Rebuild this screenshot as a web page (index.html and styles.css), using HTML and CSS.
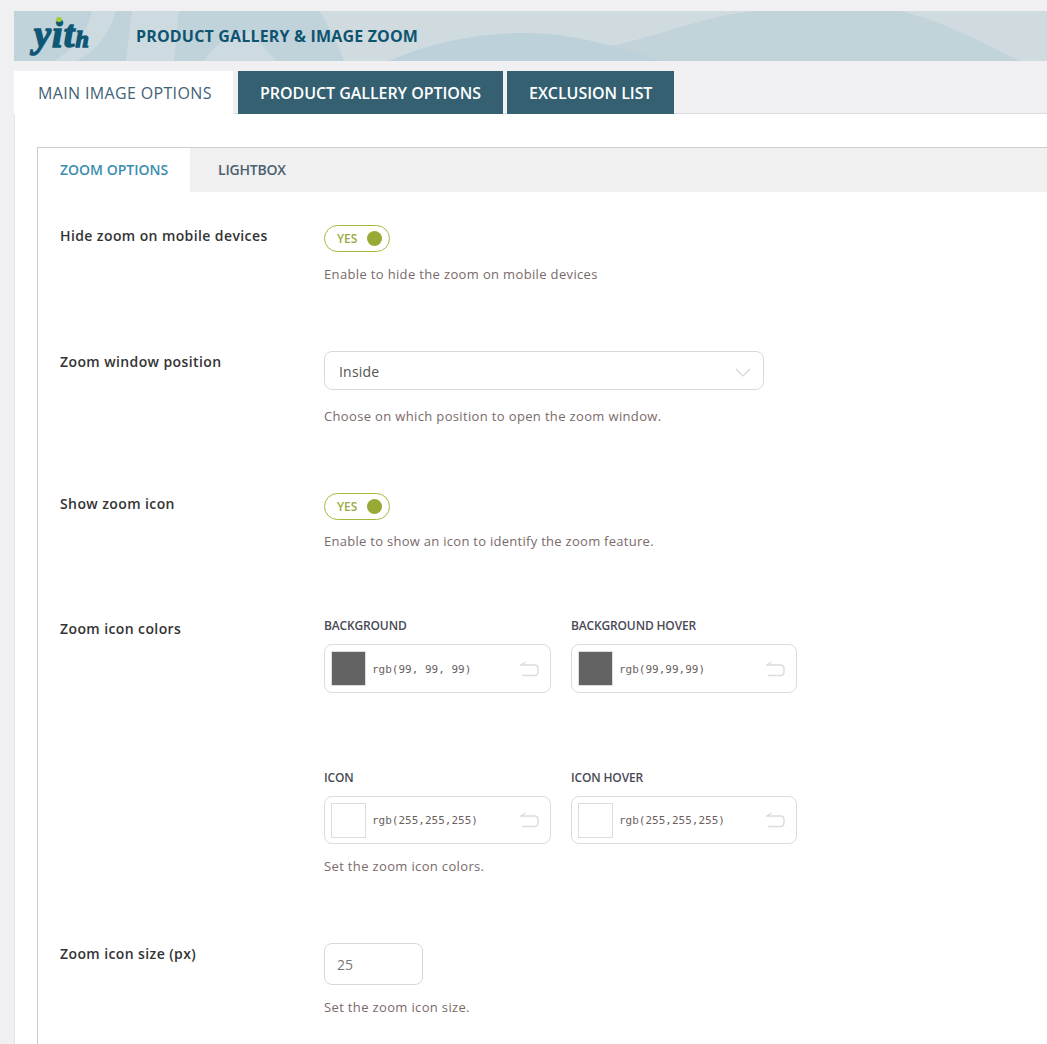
FILE: index.html
```html
<!DOCTYPE html>
<html lang="en">
<head>
    <meta charset="UTF-8">
    <title>Product Gallery &amp; Image Zoom</title>
    <link rel="stylesheet" href="styles.css">
</head>
<body>
    <div class="wrap">
        <header class="banner">
            <svg class="banner-waves" viewBox="0 0 1033 50" preserveAspectRatio="none" aria-hidden="true">
                <path d="M0 0H1033V50H0Z" fill="#d0dbe0"/>
                <path d="M0 0H305C315 15 325 35 330 50H0Z" fill="#c0d3db"/>
                <path d="M78 0H102C96 20 84 40 62 50H40C60 38 74 20 78 0Z" fill="#cddbe1"/>
                <path d="M118 0H165L160 50H112Z" fill="#cddbe1"/>
                <path d="M190 50C200 34 215 24 235 20L262 50Z" fill="#cddbe1"/>
                <path d="M400 50C470 40 560 45 606 33C660 20 700 2 745 0H886C930 10 975 35 1006 50Z" fill="#c3d3da"/>
                <path d="M375 50C420 30 470 22 510 22C560 22 600 35 650 50Z" fill="#bdd1da"/>
            </svg>
            <span class="logo">yit<small>h</small><i class="logo-dot"></i></span>
            <h1 class="banner-title">PRODUCT GALLERY &amp; IMAGE ZOOM</h1>
        </header>

        <nav class="main-tabs">
            <a class="main-tab active">MAIN IMAGE OPTIONS</a>
            <a class="main-tab">PRODUCT GALLERY OPTIONS</a>
            <a class="main-tab">EXCLUSION LIST</a>
        </nav>

        <div class="panel">
            <div class="box">
                <div class="sub-tabs">
                    <a class="sub-tab active">ZOOM OPTIONS</a>
                    <a class="sub-tab">LIGHTBOX</a>
                </div>

                <div class="option">
                    <label class="option-label">Hide zoom on mobile devices</label>
                    <div class="option-field">
                        <span class="toggle">YES<i class="toggle-dot"></i></span>
                        <p class="desc desc-first">Enable to hide the zoom on mobile devices</p>
                    </div>
                </div>

                <div class="option">
                    <label class="option-label">Zoom window position</label>
                    <div class="option-field">
                        <div class="select">
                            <span>Inside</span>
                            <svg class="chevron" width="16" height="9" viewBox="0 0 16 9"><path d="M1 1l7 7 7-7" fill="none" stroke="#d4d4d4" stroke-width="1.2"/></svg>
                        </div>
                        <p class="desc desc-select">Choose on which position to open the zoom window.</p>
                    </div>
                </div>

                <div class="option">
                    <label class="option-label">Show zoom icon</label>
                    <div class="option-field">
                        <span class="toggle">YES<i class="toggle-dot"></i></span>
                        <p class="desc desc-show">Enable to show an icon to identify the zoom feature.</p>
                    </div>
                </div>

                <div class="option">
                    <label class="option-label">Zoom icon colors</label>
                    <div class="option-field">
                        <div class="color-grid">
                            <div class="color-item">
                                <div class="color-title">BACKGROUND</div>
                                <div class="color-input">
                                    <span class="swatch swatch-dark"></span>
                                    <code class="color-value">rgb(99, 99, 99)</code>
                                    <svg class="reset" width="19" height="16" viewBox="0 0 19 16"><path d="M5.500 1L1 4H14.500Q18 4 18 7.500V10.500Q18 14.500 14.500 14.500H2" fill="none" stroke="#dcdcdc" stroke-width="1.400"/></svg>
                                </div>
                            </div>
                            <div class="color-item">
                                <div class="color-title">BACKGROUND HOVER</div>
                                <div class="color-input">
                                    <span class="swatch swatch-dark"></span>
                                    <code class="color-value">rgb(99,99,99)</code>
                                    <svg class="reset" width="19" height="16" viewBox="0 0 19 16"><path d="M5.500 1L1 4H14.500Q18 4 18 7.500V10.500Q18 14.500 14.500 14.500H2" fill="none" stroke="#dcdcdc" stroke-width="1.400"/></svg>
                                </div>
                            </div>
                            <div class="color-item">
                                <div class="color-title">ICON</div>
                                <div class="color-input color-input-low">
                                    <span class="swatch"></span>
                                    <code class="color-value">rgb(255,255,255)</code>
                                    <svg class="reset" width="19" height="16" viewBox="0 0 19 16"><path d="M5.500 1L1 4H14.500Q18 4 18 7.500V10.500Q18 14.500 14.500 14.500H2" fill="none" stroke="#dcdcdc" stroke-width="1.400"/></svg>
                                </div>
                            </div>
                            <div class="color-item">
                                <div class="color-title">ICON HOVER</div>
                                <div class="color-input color-input-low">
                                    <span class="swatch"></span>
                                    <code class="color-value">rgb(255,255,255)</code>
                                    <svg class="reset" width="19" height="16" viewBox="0 0 19 16"><path d="M5.500 1L1 4H14.500Q18 4 18 7.500V10.500Q18 14.500 14.500 14.500H2" fill="none" stroke="#dcdcdc" stroke-width="1.400"/></svg>
                                </div>
                            </div>
                        </div>
                        <p class="desc desc-colors">Set the zoom icon colors.</p>
                    </div>
                </div>

                <div class="option">
                    <label class="option-label">Zoom icon size (px)</label>
                    <div class="option-field">
                        <div class="number-input">25</div>
                        <p class="desc desc-first">Set the zoom icon size.</p>
                    </div>
                </div>
            </div>
        </div>
    </div>
</body>
</html>
```

FILE: styles.css
```css
html, body {
    height: 1044px;
    overflow: hidden;
}
body {
    margin: 0;
    background-color: #f0f0f2;
    font-family: "Open Sans", sans-serif;
    color: #333;
}
.wrap {
    width: 1033px;
    margin-left: 14px;
    padding-top: 11px;
}
.banner {
    position: relative;
    height: 50px;
    display: flex;
    align-items: center;
    overflow: hidden;
}
.banner-waves {
    position: absolute;
    left: 0;
    top: 0;
    width: 100%;
    height: 100%;
}
.logo {
    position: relative;
    width: 122px;
    box-sizing: border-box;
    padding-left: 20px;
    font-family: "Liberation Serif", serif;
    font-style: italic;
    font-weight: bold;
    font-size: 38px;
    line-height: 50px;
    letter-spacing: 1.2px;
    color: #0e5876;
    -webkit-text-stroke: 1.5px #0e5876;
}
.logo small {
    font-size: 24px;
}
.logo-dot {
    position: absolute;
    left: 42px;
    top: 8px;
    width: 6px;
    height: 5px;
    border-radius: 50%;
    background-color: #a6cc38;
}
.banner-title {
    position: relative;
    margin: 0;
    font-size: 16px;
    font-weight: 700;
    letter-spacing: .17px;
    color: #0e5470;
}
.main-tabs {
    display: flex;
    margin-top: 10px;
    height: 43px;
}
.main-tab {
    height: 43px;
    line-height: 45px;
    margin-right: 4px;
    padding: 0 22px;
    background-color: #346072;
    color: #fff;
    font-size: 16px;
    font-weight: 600;
    letter-spacing: -.05px;
    white-space: nowrap;
}
.main-tab.active {
    width: 219px;
    box-sizing: border-box;
    margin-right: 5px;
    padding: 0 0 0 24px;
    background-color: #fff;
    color: #3f6275;
    font-weight: 500;
    letter-spacing: .35px;
}
.panel {
    background-color: #fff;
    border-top: 1px solid #dcdcde;
    border-left: 1px solid #e4e4e4;
    margin-top: -1px;
    padding: 33px 0 0 22px;
    height: 900px;
}
.box {
    border: 1px solid #ccc;
    border-width: 1px 0 0 1px;
    height: 900px;
}
.sub-tabs {
    display: flex;
    height: 44px;
    background-color: #f0f0f0;
}
.sub-tab {
    padding: 0 22px;
    line-height: 44px;
    font-size: 14px;
    font-weight: 550;
    letter-spacing: -.2px;
    white-space: nowrap;
    color: #4c6170;
    margin-left: 6px;
}
.sub-tab.active {
    width: 152px;
    box-sizing: border-box;
    margin-left: 0;
    letter-spacing: 0;
    background-color: #fff;
    color: #3a8dae;
}
.option {
    display: flex;
    padding: 68px 0 0 22px;
}
.sub-tabs + .option {
    padding-top: 33px;
}
.option-label {
    width: 264px;
    flex: none;
    margin-top: 1px;
    font-size: 14px;
    font-weight: 550;
    line-height: 20px;
    letter-spacing: .4px;
    color: #333;
}
.toggle {
    display: flex;
    align-items: center;
    justify-content: space-between;
    box-sizing: border-box;
    width: 66px;
    height: 27px;
    padding: 0 7px 0 12px;
    border: 1px solid #a4b83e;
    border-radius: 14px;
    font-size: 12px;
    font-weight: 600;
    color: #9aaa3f;
}
.toggle-dot {
    width: 15px;
    height: 15px;
    border-radius: 50%;
    background-color: #99a935;
}
.desc {
    margin: 12px 0 0;
    font-size: 13px;
    line-height: 18px;
    letter-spacing: .35px;
    color: #7a6a6a;
}
.desc-first { margin-top: 13px; }
.desc-select { margin-top: 17px; }
.desc-show { letter-spacing: .28px; }
.desc-colors { margin-top: 13px; }
.select {
    display: flex;
    align-items: center;
    justify-content: space-between;
    box-sizing: border-box;
    width: 440px;
    height: 39px;
    padding: 1px 12px 0 14px;
    border: 1px solid #d8d8d8;
    border-radius: 8px;
    font-size: 14px;
    letter-spacing: .2px;
    color: #555;
}
.chevron {
    margin-top: 2px;
}
.color-grid {
    display: grid;
    grid-template-columns: 227px 226px;
    column-gap: 20px;
    row-gap: 76px;
    margin-top: -1px;
}
.color-title {
    font-size: 12px;
    font-weight: 550;
    line-height: 17px;
    letter-spacing: -.15px;
    color: #4a4a55;
    margin-bottom: 10px;
}
.color-input {
    display: flex;
    align-items: center;
    box-sizing: border-box;
    height: 49px;
    padding: 0 11px 0 6px;
    border: 1px solid #dcdcdc;
    border-radius: 8px;
}
.color-input-low {
    height: 48px;
}
.swatch {
    box-sizing: border-box;
    width: 35px;
    height: 35px;
    flex: none;
    border: 1px solid #ddd;
    background-color: #fff;
}
.swatch-dark {
    background-color: #636363;
}
.color-value {
    flex: 1;
    margin: 1px 0 0 6px;
    font-family: "DejaVu Sans Mono", monospace;
    font-size: 11px;
    color: #6b5f5f;
}
.reset {
    flex: none;
}
.number-input {
    box-sizing: border-box;
    width: 99px;
    height: 42px;
    padding-left: 12px;
    line-height: 42px;
    border: 1px solid #d8d8d8;
    border-radius: 8px;
    font-size: 14px;
    color: #777;
}
```
